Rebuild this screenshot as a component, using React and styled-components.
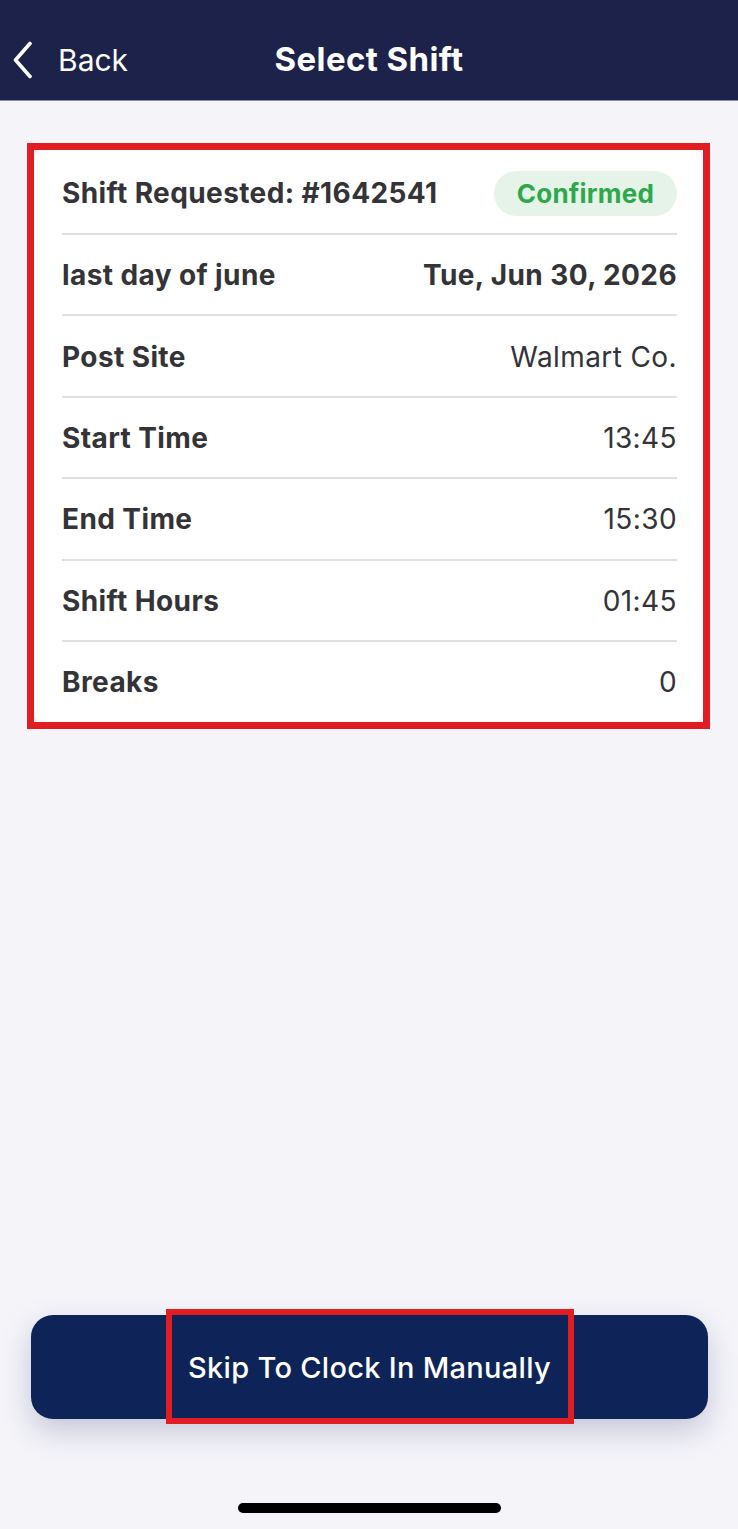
import styled, { createGlobalStyle } from "styled-components";

const GlobalStyle = createGlobalStyle`
  html, body {
    margin: 0;
    padding: 0;
    background: #f4f4f9;
  }
  body {
    font-family: Inter, "Noto Sans", sans-serif;
  }
`;

const Screen = styled.div`
  display: flex;
  flex-direction: column;
  min-height: 1529px;
  background: #f4f4f9;
`;

const Header = styled.header`
  position: relative;
  display: flex;
  align-items: center;
  justify-content: center;
  height: 101px;
  padding-top: 18px;
  box-sizing: border-box;
  background: #1c2249;
  border-bottom: 1px solid #8a8ea3;
`;

const BackButton = styled.button`
  position: absolute;
  left: 12px;
  top: 41px;
  display: flex;
  align-items: center;
  gap: 22px;
  padding: 0;
  border: 0;
  background: none;
  color: #fff;
  font-family: Inter, sans-serif;
  font-size: 30px;
  font-weight: 400;
  letter-spacing: 0px;
`;

const Title = styled.h1`
  margin: 0;
  color: #fff;
  font-family: Inter, sans-serif;
  font-size: 33px;
  font-weight: 700;
  letter-spacing: 0.4px;
`;

const Content = styled.main`
  flex: 1;
  padding: 42px 28px 0 27px;
`;

const Highlight = styled.div`
  border: 7px solid #e01d22;
`;

const Card = styled.section`
  background: #fff;
  border-radius: 10px;
  padding: 0 26px 0 28px;
`;

const Row = styled.div`
  display: flex;
  align-items: center;
  justify-content: space-between;
  height: ${(p) => (p.$first ? "85px" : p.$last ? "80px" : "81.4px")};
  padding-top: ${(p) => (p.$first ? "3px" : "1px")};
  box-sizing: border-box;
  border-bottom: ${(p) => (p.$last ? "none" : "2px solid #e0e0e3")};
`;

const Label = styled.span`
  color: #333338;
  font-family: Inter, sans-serif;
  font-size: 28px;
  font-weight: 700;
  letter-spacing: 0.4px;
`;

const Value = styled.span`
  color: #333338;
  font-family: Inter, sans-serif;
  font-size: 28px;
  font-weight: ${(p) => (p.$bold ? 700 : 400)};
  letter-spacing: 0.4px;
`;

const Badge = styled.span`
  display: inline-flex;
  align-items: center;
  justify-content: center;
  height: 45px;
  padding: 0 23px;
  border-radius: 23px;
  background: #e5f3e8;
  color: #2ea84b;
  font-family: Inter, sans-serif;
  font-size: 26px;
  font-weight: 700;
  letter-spacing: 0.2px;
`;

const Footer = styled.div`
  display: flex;
  flex-direction: column;
  align-items: center;
  padding: 0 30px 16px 31px;
`;

const PrimaryButton = styled.button`
  position: relative;
  width: 100%;
  height: 104px;
  border: 0;
  border-radius: 22px;
  background: #0e2458;
  color: #fff;
  font-family: Inter, sans-serif;
  font-size: 29px;
  font-weight: 500;
  letter-spacing: 0.3px;
  box-shadow: 0 12px 30px rgba(30, 40, 100, 0.22);
`;

const ButtonMark = styled.span`
  position: absolute;
  left: 135px;
  top: -6px;
  width: 408px;
  height: 115px;
  box-sizing: border-box;
  border: 6px solid #e01d22;
`;

const HomeIndicator = styled.div`
  width: 263px;
  height: 10px;
  margin-top: 84px;
  border-radius: 5px;
  background: #000;
`;

const rows = [
  { label: "last day of june", value: "Tue, Jun 30, 2026", bold: true },
  { label: "Post Site", value: "Walmart Co." },
  { label: "Start Time", value: "13:45" },
  { label: "End Time", value: "15:30" },
  { label: "Shift Hours", value: "01:45" },
  { label: "Breaks", value: "0" },
];

export default function App() {
  return (
    <>
      <GlobalStyle />
      <Screen>
        <Header>
          <BackButton>
            <svg width="24" height="38" viewBox="0 0 24 38" fill="none">
              <path
                d="M18 2.5 L3.5 19 L18 35.5"
                stroke="#fff"
                strokeWidth="3.6"
                strokeLinecap="round"
                strokeLinejoin="round"
              />
            </svg>
            Back
          </BackButton>
          <Title>Select Shift</Title>
        </Header>
        <Content>
          <Highlight>
            <Card>
              <Row $first>
                <Label>Shift Requested: #1642541</Label>
                <Badge>Confirmed</Badge>
              </Row>
              {rows.map((r, i) => (
                <Row key={r.label} $last={i === rows.length - 1}>
                  <Label>{r.label}</Label>
                  <Value $bold={r.bold}>{r.value}</Value>
                </Row>
              ))}
            </Card>
          </Highlight>
        </Content>
        <Footer>
          <PrimaryButton>
            Skip To Clock In Manually
            <ButtonMark />
          </PrimaryButton>
          <HomeIndicator />
        </Footer>
      </Screen>
    </>
  );
}
